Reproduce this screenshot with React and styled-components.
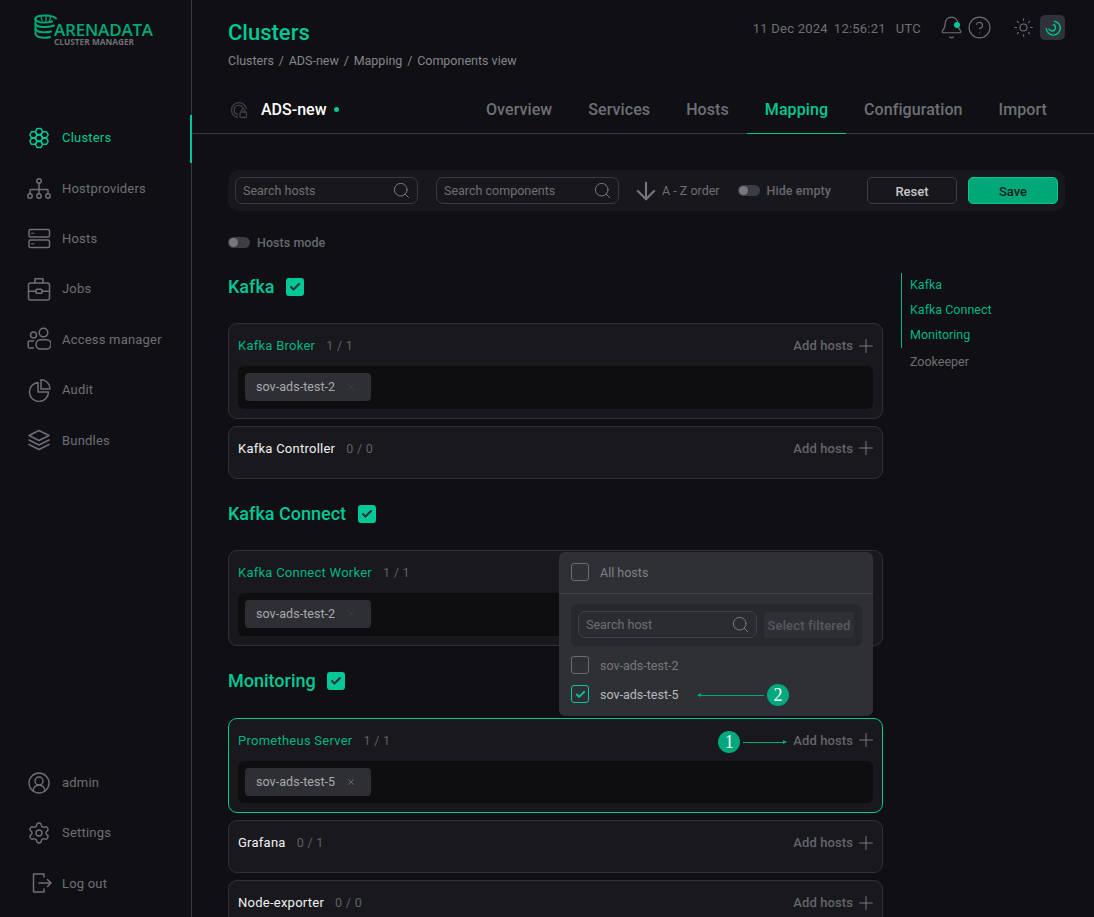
import React from "react";
import styled, { createGlobalStyle } from "styled-components";
import { ArrowDown, Bell, Check, CircleHelp, CircleUserRound, Plus, Search, Settings, Sun, X } from "lucide-react";

const GREEN = "#00c896";
const GREY = "#6e6f76";

const GlobalStyle = createGlobalStyle`
  html, body {
    margin: 0;
    height: 917px;
    overflow: hidden;
    background: #100f13;
    font-family: Roboto, "Liberation Sans", sans-serif;
    font-size: 13px;
    color: ${GREY};
  }
  * { box-sizing: border-box; }
`;

const Page = styled.div`
  display: flex;
  height: 917px;
  overflow: hidden;
`;

const Sidebar = styled.aside`
  width: 192px;
  flex: none;
  display: flex;
  flex-direction: column;
  border-right: 1px solid #3a3b42;
`;

const Logo = styled.div`
  height: 112.5px;
  flex: none;
  display: flex;
  padding: 14px 0 0 34px;
  color: #00a878;
`;

const LogoText = styled.div`
  margin-left: -4px;
  padding-top: 7px;
  font-family: "Open Sans", sans-serif;
  font-size: 17px;
  font-weight: 600;
  line-height: 17px;
  letter-spacing: -0.2px;
  small {
    display: block;
    font-size: 8.3px;
    font-weight: 700;
    line-height: 8px;
    letter-spacing: 0;
    color: #6d7078;
  }
`;

const NavList = styled.nav`
  display: flex;
  flex-direction: column;
  margin-top: ${(p) => (p.$bottom ? "auto" : "0")};
  margin-bottom: ${(p) => (p.$bottom ? "8.5px" : "0")};
`;

const NavItem = styled.a`
  position: relative;
  height: 50.4px;
  display: flex;
  align-items: center;
  gap: 11.5px;
  padding-left: 26.5px;
  font-size: 13px;
  letter-spacing: 0.2px;
  color: ${(p) => (p.$active ? GREEN : GREY)};
  svg { flex: none; }
  &::after {
    content: ${(p) => (p.$active ? '""' : "none")};
    position: absolute;
    right: -1px;
    top: 2.5px;
    bottom: 0;
    width: 2px;
    background: ${GREEN};
  }
`;

const Main = styled.main`
  flex: 1;
  min-width: 0;
`;

const Header = styled.header`
  display: flex;
  justify-content: space-between;
  height: 86px;
  padding: 19px 29px 0 36px;
`;

const Title = styled.h1`
  margin: 0;
  font-size: 22px;
  font-weight: 500;
  line-height: 27px;
  color: ${GREEN};
`;

const Crumbs = styled.div`
  display: flex;
  gap: 4.8px;
  margin-top: 7px;
  font-size: 12.5px;
  line-height: 15px;
  color: #85868c;
`;

const HeaderTools = styled.div`
  display: flex;
  align-items: flex-start;
  margin-top: -4px;
  color: ${GREY};
`;

const Clock = styled.div`
  display: flex;
  gap: 6px;
  height: 25px;
  align-items: center;
  padding-top: 1px;
  font-size: 13px;
  letter-spacing: 0.23px;
  span:last-child { margin-left: 4px; }
`;

const ToolIcon = styled.span`
  position: relative;
  display: flex;
  align-items: center;
  justify-content: center;
  width: 26px;
  height: 25px;
  margin-left: ${(p) => p.$gap || 0}px;
`;

const BellDot = styled.i`
  position: absolute;
  top: 7px;
  right: 4px;
  width: 6px;
  height: 6px;
  border-radius: 50%;
  background: ${GREEN};
`;

const MoonButton = styled.span`
  display: flex;
  align-items: center;
  justify-content: center;
  width: 25px;
  height: 25px;
  margin-left: 4px;
  border-radius: 5px;
  background: #2f3238;
  color: ${GREEN};
`;

const TabBar = styled.div`
  display: flex;
  align-items: center;
  height: 48px;
  padding: 0 29px 0 36px;
  border-bottom: 1px solid #3a3b42;
`;

const ClusterName = styled.div`
  display: flex;
  align-items: center;
  font-size: 16px;
  font-weight: 500;
  color: #fff;
  svg { margin: 0 13px 0 2px; }
  i {
    width: 5px;
    height: 5px;
    margin-left: 7px;
    border-radius: 50%;
    background: ${GREEN};
  }
`;

const Tabs = styled.div`
  display: flex;
  align-self: stretch;
  margin-left: auto;
`;

const Tab = styled.a`
  display: flex;
  align-items: center;
  padding: 0 18px;
  margin-bottom: -1px;
  font-size: 16px;
  font-weight: 500;
  letter-spacing: 0.08px;
  color: ${(p) => (p.$active ? GREEN : GREY)};
  border-bottom: 1px solid ${(p) => (p.$active ? GREEN : "transparent")};
`;

const Body = styled.div`
  padding: 36px 29px 0 36px;
`;

const Toolbar = styled.div`
  display: flex;
  align-items: center;
  height: 41px;
  padding: 0 7px;
  border-radius: 10px;
  background: #18171b;
`;

const SearchBox = styled.div`
  display: flex;
  align-items: center;
  justify-content: space-between;
  width: ${(p) => p.$width || 183}px;
  height: 27px;
  padding: 0 7px;
  border: 1px solid ${(p) => p.$border || "#383a42"};
  border-radius: 7px;
  font-size: 12.5px;
  color: ${GREY};
  margin-right: ${(p) => p.$mr || 0}px;
  background: ${(p) => p.$bg || "transparent"};
  svg {
    margin-right: -1px;
    color: #85868c;
  }
`;

const SortLabel = styled.div`
  display: flex;
  align-items: center;
  gap: 2.5px;
  margin-left: 12.5px;
  font-size: 12.5px;
  svg { color: #77787d; }
`;

const ToggleRow = styled.div`
  display: flex;
  align-items: center;
  gap: 7px;
  margin-left: ${(p) => p.$ml || 0}px;
  font-size: 12.5px;
  font-weight: 500;
  letter-spacing: 0.05px;
  color: #666870;
`;

const Track = styled.span`
  position: relative;
  width: 22px;
  height: 11px;
  border-radius: 6px;
  background: #3a3d45;
  &::before {
    content: "";
    position: absolute;
    left: 1px;
    top: 1px;
    width: 9px;
    height: 9px;
    border-radius: 50%;
    background: #77787d;
  }
`;

const ButtonRow = styled.div`
  display: flex;
  gap: 11px;
  margin-left: auto;
`;

const Button = styled.button`
  width: 90px;
  height: 27px;
  padding: 1px 0 0;
  border: 1px solid ${(p) => (p.$primary ? GREEN : "#3a3d45")};
  border-radius: 5px;
  background: ${(p) => (p.$primary ? "#00a878" : "transparent")};
  color: ${(p) => (p.$primary ? "#10201c" : "#c5c6c8")};
  font: 500 13px Roboto, sans-serif;
`;

const ModeRow = styled.div`
  display: flex;
  height: 18px;
  margin-top: 22px;
  margin-bottom: 22px;
`;

const Columns = styled.div`
  display: flex;
  gap: 18px;
  align-items: flex-start;
`;

const Content = styled.div`
  width: 655px;
  flex: none;
  padding-top: 4px;
`;

const Section = styled.section`
  margin-bottom: 25.7px;
`;

const SectionTitle = styled.h2`
  display: flex;
  align-items: center;
  gap: 11.5px;
  height: 18px;
  margin: 0 0 28px;
  font-size: 18px;
  font-weight: 500;
  color: ${GREEN};
`;

const SectionCheck = styled.span`
  display: flex;
  align-items: center;
  justify-content: center;
  width: 18px;
  height: 18px;
  margin-top: 1px;
  border-radius: 3px;
  background: ${GREEN};
  color: #2f3036;
`;

const Card = styled.div`
  position: relative;
  min-height: 53px;
  padding: 0 9px 9px;
  margin-bottom: 7px;
  border: 1px solid ${(p) => (p.$focused ? GREEN : "#303136")};
  border-radius: 9px;
  background: #19181c;
`;

const CardHead = styled.div`
  display: flex;
  align-items: center;
  height: 42px;
  padding-top: 1.4px;
`;

const CardName = styled.span`
  font-size: 13px;
  letter-spacing: 0.25px;
  color: ${(p) => (p.$on ? "#00b587" : "#f2f2f2")};
`;

const Count = styled.span`
  margin-left: 11px;
  font-size: 12.5px;
  letter-spacing: 0.3px;
  color: #5f6168;
`;

const AddHosts = styled.span`
  position: relative;
  display: flex;
  align-items: center;
  gap: 2px;
  margin-left: auto;
  margin-right: -4px;
  font-size: 13px;
  font-weight: 500;
  letter-spacing: 0.1px;
  color: #62656e;
  svg { color: #77787d; }
`;

const Tray = styled.div`
  display: flex;
  height: 42.6px;
  padding: 7px 7px 7.6px;
  border-radius: 6px;
  background: #0e0d10;
`;

const Chip = styled.div`
  display: flex;
  align-items: center;
  width: 126px;
  height: 28px;
  padding: 0 0 1px 11px;
  border-radius: 4px;
  background: #2e2f34;
  font-size: 12.5px;
  letter-spacing: 0.05px;
  color: #a9aaad;
  svg {
    margin: 1px 0 0 10.5px;
    color: ${(p) => (p.$dim ? "#43454c" : "#8b8c92")};
  }
`;

const Popover = styled.div`
  position: absolute;
  top: 0.7px;
  right: 9px;
  width: 314px;
  height: 164px;
  border-radius: 6px;
  background: #2f3036;
`;

const AllRow = styled.div`
  display: flex;
  align-items: center;
  gap: 11px;
  height: 42px;
  padding-left: 12px;
  border-bottom: 1px solid #3a424c;
  font-size: 12.5px;
  color: #7f8084;
`;

const SearchTray = styled.div`
  display: flex;
  align-items: center;
  justify-content: space-between;
  width: 291px;
  height: 42px;
  margin: 10px 0 0 12px;
  padding: 0 8px 0 7px;
  border-radius: 6px;
  background: #27282c;
`;

const FilterButton = styled.span`
  display: flex;
  align-items: center;
  justify-content: center;
  width: 90px;
  height: 26px;
  padding-top: 2px;
  border-radius: 4px;
  background: #2f3036;
  font-size: 13px;
  font-weight: 500;
  letter-spacing: 0.15px;
  color: #565962;
`;

const HostList = styled.div`
  display: flex;
  flex-direction: column;
  margin-top: 5px;
  padding-left: 12px;
`;

const HostRow = styled.div`
  position: relative;
  display: flex;
  align-items: center;
  gap: 11px;
  height: 29px;
  font-size: 12.5px;
  color: ${(p) => (p.$on ? "#b9babd" : "#77787d")};
`;

const Box = styled.span`
  display: flex;
  align-items: center;
  justify-content: center;
  width: 18px;
  height: 18px;
  border: 1px solid ${(p) => (p.$on ? GREEN : "#6a6b70")};
  border-radius: 3px;
  color: ${GREEN};
`;

const Callout = styled.span`
  position: absolute;
  top: calc(50% + ${(p) => p.$drop}px);
  display: flex;
  flex-direction: ${(p) => (p.$reverse ? "row-reverse" : "row")};
  align-items: center;
  transform: translateY(-50%);
  ${(p) => p.$place}
`;

const Badge = styled.b`
  display: flex;
  align-items: center;
  justify-content: center;
  width: 22px;
  height: 22px;
  border-radius: 50%;
  background: #00a87e;
  font-family: "Liberation Serif", serif;
  font-size: 18px;
  font-weight: 400;
  color: #fff;
`;

const Arrow = styled.i`
  position: relative;
  display: block;
  width: ${(p) => p.$width}px;
  height: 1px;
  margin: 0 ${(p) => (p.$reverse ? "3px" : "0")} 0 ${(p) => (p.$reverse ? "0" : "3px")};
  background: #00a87e;
  &::after {
    content: "";
    position: absolute;
    top: -2px;
    ${(p) => (p.$reverse ? "left: -1px;" : "right: -1px;")}
    border-style: solid;
    border-width: 2.5px 0 2.5px 4px;
    border-color: transparent transparent transparent #00a87e;
    ${(p) => (p.$reverse ? "transform: rotate(180deg);" : "")}
  }
`;

const Outline = styled.div`
  width: 130px;
  flex: none;
  font-size: 12.5px;
`;

const OutlineActive = styled.div`
  border-left: 1px solid #00b587;
`;

const OutlineItem = styled.a`
  display: flex;
  align-items: center;
  height: 25px;
  padding: ${(p) => (p.$on ? "0 0 2px 8px" : "1px 0 0 9px")};
  color: ${(p) => (p.$on ? "#00b587" : GREY)};
`;

const icon = { width: 24, height: 24, viewBox: "0 0 24 24", fill: "none", stroke: "currentColor", strokeWidth: 1.5, strokeLinecap: "round", strokeLinejoin: "round" };

const hexagon = (cx, cy, r) =>
  [0, 60, 120, 180, 240, 300]
    .map((a) => `${(cx + r * Math.cos((a * Math.PI) / 180)).toFixed(2)},${(cy + r * Math.sin((a * Math.PI) / 180)).toFixed(2)}`)
    .join(" ");

const ClustersIcon = () => (
  <svg {...icon}>
    {[[12, 12], [12, 5.5], [12, 18.5], [6.4, 8.75], [17.6, 8.75], [6.4, 15.25], [17.6, 15.25]].map(([x, y]) => (
      <polygon key={`${x}-${y}`} points={hexagon(x, y, 3.6)} />
    ))}
  </svg>
);

const TreeIcon = () => (
  <svg {...icon}>
    <circle cx="12" cy="5" r="2.2" />
    <circle cx="3" cy="20" r="2.2" />
    <circle cx="12" cy="20" r="2.2" />
    <circle cx="21" cy="20" r="2.2" />
    <path d="M12 7.2V17.8M3 17.8V14.5Q3 13.5 4 13.5H20Q21 13.5 21 14.5V17.8" />
  </svg>
);

const HostsIcon = () => (
  <svg {...icon}>
    <rect x="2" y="3.5" width="20.5" height="7.5" rx="1.5" />
    <rect x="2" y="14" width="20.5" height="7.5" rx="1.5" />
    <path d="M4.5 7.2H7M4.5 17.8H7" strokeWidth="1" />
  </svg>
);

const JobsIcon = () => (
  <svg {...icon}>
    <rect x="1.5" y="6" width="21" height="17" rx="2" />
    <path d="M8 6V1.8H16V6M1.5 14.2H9M15 14.2H22.5" />
    <rect x="9" y="12.2" width="6" height="4" rx="0.8" />
  </svg>
);

const AccessIcon = () => (
  <svg {...icon}>
    <circle cx="16.5" cy="5.6" r="4.3" />
    <rect x="9" y="12.8" width="15" height="9.2" rx="4.4" />
    <circle cx="6.5" cy="8" r="3" />
    <path d="M6.5 14H2.5Q1.2 14 1.2 15.3V19.7Q1.2 21 2.5 21H6.5" />
  </svg>
);

const AuditIcon = () => (
  <svg {...icon}>
    <path d="M11 4.5A9.5 9.5 0 1 0 21.5 14H11Z" />
    <path d="M14 1.8A9 9 0 0 1 23 11H14Z" />
  </svg>
);

const BundlesIcon = () => (
  <svg {...icon}>
    <path d="M12 2.5L22 7.5L12 12.5L2 7.5Z" />
    <path d="M2 12L12 17L22 12M2 16.5L12 21.5L22 16.5" />
  </svg>
);

const LogOutIcon = () => (
  <svg {...icon} style={{ overflow: "visible" }}>
    <path d="M17 6V3H6.5V21H17V18M12 12H24M20.5 8.5L24 12L20.5 15.5" />
  </svg>
);

const LogoMark = () => (
  <svg width="24" height="25" viewBox="0 0 24 25" fill="none" stroke="currentColor" strokeWidth="2" strokeLinecap="round">
    <path d="M22 4.5C18 .8 5 .8 2 3.5C.5 5 2 7.5 6 8.2C10 8.8 15 8.6 18 7.5" />
    <path d="M7 3L8 6.5M12 2.5V7M16.5 3L15.5 7" strokeWidth="1.2" />
    <path d="M1.5 5V20C2.5 24 12 24.5 16 23" />
    <path d="M1.5 10.5C4 13.5 13 14 20 11.5M1.5 15.5C4 18.5 12 19 17 17.5" />
  </svg>
);

const ClusterGlyph = () => (
  <svg width="18" height="18" viewBox="0 0 18 18" fill="none" stroke="#3f4047" strokeWidth="1.3">
    <path d="M8 16.5A7.5 7.5 0 1 1 16.4 8" />
    <path d="M8 13.5A4.6 4.6 0 1 1 13.2 8" />
    <rect x="10" y="11" width="6.5" height="5.5" rx="1" />
    <path d="M11.5 11V9.6A1.8 1.8 0 0 1 15 9.6V11" />
  </svg>
);

const MoonIcon = () => (
  <svg width="16" height="16" viewBox="0 0 16 16" fill="none" stroke="currentColor" strokeWidth="1.4" strokeLinecap="round">
    <path d="M9.5 1.2A7 7 0 1 1 1.3 8.8" />
    <path d="M8.5 4.4C10.8 5.5 11 9 9.2 10.4C7.6 11.6 5 11 4 9.2" />
  </svg>
);

const mainNav = [
  ["Clusters", ClustersIcon],
  ["Hostproviders", TreeIcon],
  ["Hosts", HostsIcon],
  ["Jobs", JobsIcon],
  ["Access manager", AccessIcon],
  ["Audit", AuditIcon],
  ["Bundles", BundlesIcon],
];

const tabs = ["Overview", "Services", "Hosts", "Mapping", "Configuration", "Import"];

const HostChip = ({ name, dim }) => (
  <Chip $dim={dim}>
    {name}
    <X size={10} strokeWidth={1.5} />
  </Chip>
);

const AddButton = ({ children }) => (
  <AddHosts>
    Add hosts
    <Plus size={22} strokeWidth={1.1} />
    {children}
  </AddHosts>
);

const ComponentCard = ({ name, count, on, focused, chip, dim, action, children }) => (
  <Card $focused={focused}>
    <CardHead>
      <CardName $on={on}>{name}</CardName>
      <Count>{count}</Count>
      <AddButton>{action}</AddButton>
    </CardHead>
    {chip && (
      <Tray>
        <HostChip name={chip} dim={dim} />
      </Tray>
    )}
    {children}
  </Card>
);

const ServiceTitle = ({ children }) => (
  <SectionTitle>
    {children}
    <SectionCheck>
      <Check size={12} strokeWidth={4} />
    </SectionCheck>
  </SectionTitle>
);

const HostPopover = () => (
  <Popover>
    <AllRow>
      <Box />
      All hosts
    </AllRow>
    <SearchTray>
      <SearchBox $width={179} $border="#3a424c" $bg="#2a2c31">
        Search host
        <Search size={19} strokeWidth={1.1} />
      </SearchBox>
      <FilterButton>Select filtered</FilterButton>
    </SearchTray>
    <HostList>
      <HostRow>
        <Box />
        sov-ads-test-2
      </HostRow>
      <HostRow $on>
        <Box $on>
          <Check size={11} strokeWidth={4} />
        </Box>
        sov-ads-test-5
        <Callout $reverse $drop={1} $place="left: 127px;">
          <Badge>2</Badge>
          <Arrow $reverse $width={66} />
        </Callout>
      </HostRow>
    </HostList>
  </Popover>
);

const App = () => (
  <Page>
    <GlobalStyle />
    <Sidebar>
      <Logo>
        <LogoMark />
        <LogoText>
          ARENADATA
          <small>CLUSTER MANAGER</small>
        </LogoText>
      </Logo>
      <NavList>
        {mainNav.map(([label, Icon], i) => (
          <NavItem key={label} $active={i === 0}>
            <Icon />
            {label}
          </NavItem>
        ))}
      </NavList>
      <NavList $bottom>
        <NavItem>
          <CircleUserRound size={24} strokeWidth={1.4} />
          admin
        </NavItem>
        <NavItem>
          <Settings size={24} strokeWidth={1.4} />
          Settings
        </NavItem>
        <NavItem>
          <LogOutIcon />
          Log out
        </NavItem>
      </NavList>
    </Sidebar>
    <Main>
      <Header>
        <div>
          <Title>Clusters</Title>
          <Crumbs>
            <span>Clusters</span>/<span>ADS-new</span>/<span>Mapping</span>/<span>Components view</span>
          </Crumbs>
        </div>
        <HeaderTools>
          <Clock>
            <span>11 Dec 2024</span>
            <span>12:56:21</span>
            <span>UTC</span>
          </Clock>
          <ToolIcon $gap={17}>
            <Bell size={25} strokeWidth={1.1} />
            <BellDot />
          </ToolIcon>
          <ToolIcon $gap={2}>
            <CircleHelp size={25} strokeWidth={1.1} />
          </ToolIcon>
          <ToolIcon $gap={18}>
            <Sun size={21} strokeWidth={1.2} />
          </ToolIcon>
          <MoonButton>
            <MoonIcon />
          </MoonButton>
        </HeaderTools>
      </Header>
      <TabBar>
        <ClusterName>
          <ClusterGlyph />
          ADS-new
          <i />
        </ClusterName>
        <Tabs>
          {tabs.map((tab) => (
            <Tab key={tab} $active={tab === "Mapping"}>
              {tab}
            </Tab>
          ))}
        </Tabs>
      </TabBar>
      <Body>
        <Toolbar>
          <SearchBox $mr={18}>
            Search hosts
            <Search size={19} strokeWidth={1.1} />
          </SearchBox>
          <SearchBox>
            Search components
            <Search size={19} strokeWidth={1.1} />
          </SearchBox>
          <SortLabel>
            <ArrowDown size={28} strokeWidth={1.8} />
            A - Z order
          </SortLabel>
          <ToggleRow $ml={18}>
            <Track />
            Hide empty
          </ToggleRow>
          <ButtonRow>
            <Button>Reset</Button>
            <Button $primary>Save</Button>
          </ButtonRow>
        </Toolbar>
        <ModeRow>
          <ToggleRow>
            <Track />
            Hosts mode
          </ToggleRow>
        </ModeRow>
        <Columns>
          <Content>
            <Section>
              <ServiceTitle>Kafka</ServiceTitle>
              <ComponentCard name="Kafka Broker" count="1 / 1" on chip="sov-ads-test-2" dim />
              <ComponentCard name="Kafka Controller" count="0 / 0" />
            </Section>
            <Section>
              <ServiceTitle>Kafka Connect</ServiceTitle>
              <ComponentCard name="Kafka Connect Worker" count="1 / 1" on chip="sov-ads-test-2" dim>
                <HostPopover />
              </ComponentCard>
            </Section>
            <Section>
              <ServiceTitle>Monitoring</ServiceTitle>
              <ComponentCard
                name="Prometheus Server"
                count="1 / 1"
                on
                focused
                chip="sov-ads-test-5"
                action={
                  <Callout $drop={2} $place="right: calc(100% + 7px);">
                    <Badge>1</Badge>
                    <Arrow $width={43} />
                  </Callout>
                }
              />
              <ComponentCard name="Grafana" count="0 / 1" />
              <ComponentCard name="Node-exporter" count="0 / 0" />
            </Section>
          </Content>
          <Outline>
            <OutlineActive>
              <OutlineItem $on>Kafka</OutlineItem>
              <OutlineItem $on>Kafka Connect</OutlineItem>
              <OutlineItem $on>Monitoring</OutlineItem>
            </OutlineActive>
            <OutlineItem>Zookeeper</OutlineItem>
          </Outline>
        </Columns>
      </Body>
    </Main>
  </Page>
);

export default App;
